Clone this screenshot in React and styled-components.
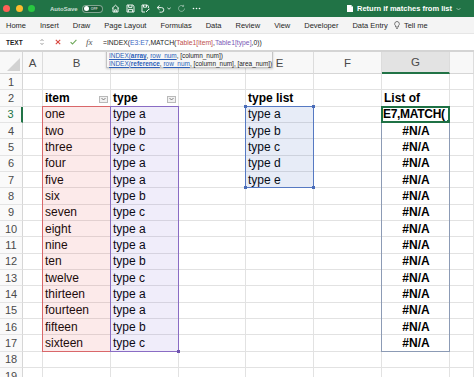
import React from "react";
import styled, { createGlobalStyle } from "styled-components";

const GlobalStyle = createGlobalStyle`
  html, body {
    margin: 0;
    padding: 0;
    width: 474px;
    height: 377px;
    overflow: hidden;
    background: #fff;
  }
  body {
    font-family: "Liberation Sans", Arial, sans-serif;
  }
`;

const Window = styled.div`
  width: 474px;
  height: 377px;
  display: flex;
  flex-direction: column;
  overflow: hidden;
`;

const TitleBar = styled.div`
  height: 17px;
  flex-shrink: 0;
  background: #217346;
  display: flex;
  align-items: center;
  padding: 0 13px 0 3px;
  color: #fff;
`;

const Lights = styled.div`
  display: flex;
  gap: 5.5px;
`;

const Light = styled.span`
  width: 7px;
  height: 7px;
  border-radius: 50%;
  background: ${p => p.$color};
`;

const AutoSave = styled.span`
  margin-left: 15px;
  font-size: 6px;
  font-weight: bold;
  color: rgba(255, 255, 255, 0.78);
`;

const Toggle = styled.span`
  margin-left: 4px;
  width: 21px;
  height: 8px;
  border-radius: 4px;
  background: #1a5c38;
  border: 1px solid rgba(255, 255, 255, 0.45);
  box-sizing: border-box;
  display: flex;
  align-items: center;
  padding-left: 1px;
  gap: 2px;
  font-size: 3.5px;
  font-weight: bold;
  color: rgba(255, 255, 255, 0.7);
`;

const Knob = styled.span`
  width: 5px;
  height: 5px;
  border-radius: 50%;
  background: #fff;
`;

const QuickIcons = styled.div`
  margin-left: 8px;
  display: flex;
  align-items: center;
  gap: 6px;
`;

const UndoGroup = styled.span`
  display: flex;
  align-items: center;
  gap: 2px;
`;

const Spacer = styled.div`
  flex: 1;
`;

const DocTitle = styled.div`
  display: flex;
  align-items: center;
  gap: 4px;
  font-size: 7.5px;
  font-weight: bold;
  color: #fff;
`;

const Tabs = styled.div`
  height: 16px;
  flex-shrink: 0;
  background: #f4f4f4;
  display: flex;
  align-items: center;
  gap: 14px;
  padding-left: 6px;
  font-size: 7.5px;
  color: #262626;
`;

const Tab = styled.span`
  white-space: nowrap;
`;

const TellMe = styled.span`
  display: flex;
  align-items: center;
  gap: 4px;
  margin-left: -8px;
`;

const FormulaBar = styled.div`
  height: 16px;
  flex-shrink: 0;
  background: #fff;
  border-top: 1px solid #e6e6e6;
  border-bottom: 2px solid #d4d4d4;
  box-sizing: content-box;
  display: flex;
  align-items: center;
`;

const NameBox = styled.div`
  width: 48px;
  box-sizing: border-box;
  padding: 0 4px 0 6px;
  display: flex;
  align-items: center;
  justify-content: space-between;
  font-size: 6.5px;
  font-weight: bold;
  color: #222;
`;

const BarIcons = styled.div`
  display: flex;
  align-items: center;
  gap: 9px;
  padding-left: 7px;
  width: 48px;
  box-sizing: border-box;
`;

const Fx = styled.span`
  font-family: "Liberation Serif", serif;
  font-style: italic;
  font-size: 9px;
  color: #555;
`;

const Formula = styled.div`
  margin-left: 7px;
  font-size: 6.8px;
  color: #222;
  white-space: nowrap;
`;

const Ref = styled.span`
  color: ${p => p.$color};
`;

const Sheet = styled.div`
  position: relative;
  flex: 1;
  overflow: hidden;
`;

const Grid = styled.div`
  display: grid;
  grid-template-columns: 23px 20px 68px 68px 67px 68px 68px 68px 1fr;
  grid-template-rows: 22px repeat(19, 16.33px);
`;

const Corner = styled.div`
  grid-row: 1;
  grid-column: 1;
  background: #f8f8f8;
  border-right: 1px solid #d6d6d6;
  border-bottom: 1px solid #d6d6d6;
  display: flex;
  align-items: flex-end;
  justify-content: flex-end;
  padding: 0 2px 2px 0;
`;

const ColHead = styled.div`
  grid-row: 1;
  grid-column: ${p => p.$c};
  background: ${p => (p.$active ? "#e3e3e3" : "#f8f8f8")};
  border-right: 1px solid #dcdcdc;
  border-bottom: ${p => (p.$active ? "2px solid #217346" : "1px solid #d6d6d6")};
  display: flex;
  align-items: center;
  justify-content: center;
  font-size: 11.5px;
  color: #4a4a4a;
`;

const RowHead = styled.div`
  grid-row: ${p => p.$r};
  grid-column: 1;
  background: #fafafa;
  border-right: ${p => (p.$active ? "2px solid #217346" : "1px solid #d6d6d6")};
  border-bottom: 1px solid #e4e4e4;
  display: flex;
  align-items: center;
  justify-content: center;
  font-size: 11px;
  line-height: 12px;
  overflow: hidden;
  color: ${p => (p.$active ? "#217346" : "#4a4a4a")};
`;

const Cell = styled.div`
  grid-row: ${p => p.$r};
  grid-column: ${p => p.$c};
  border-right: 1px solid #e2e2e2;
  border-bottom: 1px solid #e2e2e2;
  display: flex;
  align-items: center;
  justify-content: ${p => (p.$center ? "center" : "space-between")};
  padding: 0 1px 0 ${p => (p.$tight ? "1px" : "2px")};
  font-size: 12px;
  letter-spacing: ${p => (p.$tight ? "-0.3px" : "normal")};
  font-weight: ${p => (p.$bold ? "bold" : "normal")};
  color: #000;
  white-space: nowrap;
  overflow: hidden;
`;

const FilterButton = styled.span`
  width: 9px;
  height: 7px;
  border: 1px solid #b9b9b9;
  background: #f1f1f1;
  box-sizing: border-box;
  display: flex;
  align-items: center;
  justify-content: center;
  margin-right: 1px;
  margin-top: 3px;
`;

const RangeBox = styled.div`
  grid-row: ${p => p.$rows};
  grid-column: ${p => p.$c};
  position: relative;
  border: ${p => p.$w || 1}px solid ${p => p.$color};
  background: ${p => p.$fill || "transparent"};
  margin: -1px 0 0 -1px;
  pointer-events: none;
`;

const Handle = styled.span`
  position: absolute;
  width: 3px;
  height: 3px;
  background: ${p => p.$color};
  ${p => (p.$top ? "top: -2px;" : "bottom: -2px;")}
  ${p => (p.$left ? "left: -2px;" : "right: -2px;")}
`;

const Tooltip = styled.div`
  position: absolute;
  left: 106px;
  top: -2px;
  width: 167px;
  height: 18px;
  box-sizing: border-box;
  background: #f6f6f6;
  border: 1px solid #c4c4c4;
  box-shadow: 0 1px 2px rgba(0, 0, 0, 0.18);
  padding: 1px 0 0 2px;
  font-size: 6.45px;
  line-height: 7.8px;
  color: #222;
  white-space: nowrap;
`;

const Link = styled.span`
  color: #2b5fb8;
  text-decoration: underline;
  font-weight: ${p => (p.$bold ? "bold" : "normal")};
`;

const items = ["one", "two", "three", "four", "five", "six", "seven", "eight", "nine", "ten", "twelve", "thirteen", "fourteen", "fifteen", "sixteen"];
const types = ["type a", "type b", "type c", "type a", "type a", "type b", "type c", "type a", "type a", "type b", "type c", "type a", "type a", "type b", "type c"];
const typeList = ["type a", "type b", "type c", "type d", "type e"];
// C and D header letters sit under the function tooltip
const columns = ["A", "B", "", "", "E", "F", "G", ""];

const Caret = () => (
  <svg width="5" height="4" viewBox="0 0 5 4">
    <path d="M0.5 1 L2.5 3 L4.5 1" fill="none" stroke="#666" strokeWidth="0.8" />
  </svg>
);

const App = () => {
  const cells = [];
  for (let row = 1; row <= 19; row++) {
    const r = row + 1;
    for (let c = 2; c <= 9; c++) {
      let content = null;
      let bold = false;
      let center = false;
      let tight = false;
      if (row === 2 && c === 3) {
        bold = true;
        content = <>item<FilterButton><Caret /></FilterButton></>;
      } else if (row === 2 && c === 4) {
        bold = true;
        content = <>type<FilterButton><Caret /></FilterButton></>;
      } else if (row === 2 && c === 6) {
        bold = true;
        content = "type list";
      } else if (row === 2 && c === 8) {
        bold = true;
        content = "List of";
      } else if (row >= 3 && row <= 17 && c === 3) {
        content = items[row - 3];
      } else if (row >= 3 && row <= 17 && c === 4) {
        content = types[row - 3];
      } else if (row >= 3 && row <= 7 && c === 6) {
        content = typeList[row - 3];
      } else if (row === 3 && c === 8) {
        bold = true;
        tight = true;
        content = "E7,MATCH(";
      } else if (row >= 4 && row <= 17 && c === 8) {
        bold = true;
        center = true;
        content = "#N/A";
      }
      cells.push(
        <Cell key={`${row}-${c}`} $r={r} $c={c} $bold={bold} $center={center} $tight={tight}>
          {content}
        </Cell>
      );
    }
  }

  return (
    <Window>
      <GlobalStyle />
      <TitleBar>
        <Lights>
          <Light $color="#fe5f57" />
          <Light $color="#febc2e" />
          <Light $color="#28c840" />
        </Lights>
        <AutoSave>AutoSave</AutoSave>
        <Toggle>
          <Knob />
          OFF
        </Toggle>
        <QuickIcons>
          <svg width="9" height="9" viewBox="0 0 9 9" fill="none" stroke="#fff" strokeWidth="0.9">
            <path d="M1 4.5 L4.5 1.2 L8 4.5 M2 3.8 V8 H7 V3.8 M3.7 8 V5.8 H5.3 V8" />
          </svg>
          <svg width="9" height="9" viewBox="0 0 9 9" fill="none" stroke="#fff" strokeWidth="0.9">
            <path d="M1 1 H6.8 L8 2.2 V8 H1 Z M2.6 1 V3.4 H6 V1 M2.4 8 V5.4 H6.6 V8" />
          </svg>
          <svg width="9" height="9" viewBox="0 0 9 9" fill="none" stroke="#fff" strokeWidth="0.9">
            <path d="M1 1 H6.3 L7.4 2.1 V4 M1 1 V8 H4 M2.5 1 V3.2 H5.5 V1 M5 8 L8.2 4.8 L8.9 5.5" />
          </svg>
          <UndoGroup>
            <svg width="9" height="9" viewBox="0 0 9 9" fill="none" stroke="#fff" strokeWidth="0.9">
              <path d="M3.5 1.5 L1.2 3.6 L3.5 5.7 M1.4 3.6 H5.5 A2.3 2.3 0 0 1 5.5 8.2 H3.5" />
            </svg>
            <svg width="4" height="3" viewBox="0 0 4 3">
              <path d="M0.3 0.5 L2 2.3 L3.7 0.5" fill="none" stroke="#fff" strokeWidth="0.8" />
            </svg>
          </UndoGroup>
          <svg width="9" height="9" viewBox="0 0 9 9" fill="none" stroke="rgba(255,255,255,0.45)" strokeWidth="0.9">
            <path d="M7.5 4.5 A3 3 0 1 1 6.4 2.1 M6.6 0.8 V2.4 H5" />
          </svg>
          <svg width="9" height="3" viewBox="0 0 9 3" fill="#fff">
            <circle cx="1.5" cy="1.5" r="0.8" />
            <circle cx="4.5" cy="1.5" r="0.8" />
            <circle cx="7.5" cy="1.5" r="0.8" />
          </svg>
        </QuickIcons>
        <Spacer />
        <DocTitle>
          <svg width="6" height="7" viewBox="0 0 6 7">
            <path d="M0 0 H4 L6 2 V7 H0 Z" fill="#fff" />
            <path d="M4 0 V2 H6" fill="#cfe3d6" />
          </svg>
          Return if matches from list
          <svg width="5" height="4" viewBox="0 0 5 4">
            <path d="M0.5 1 L2.5 3 L4.5 1" fill="none" stroke="rgba(255,255,255,0.6)" strokeWidth="0.8" />
          </svg>
        </DocTitle>
      </TitleBar>

      <Tabs>
        <Tab>Home</Tab>
        <Tab>Insert</Tab>
        <Tab>Draw</Tab>
        <Tab>Page Layout</Tab>
        <Tab>Formulas</Tab>
        <Tab>Data</Tab>
        <Tab>Review</Tab>
        <Tab>View</Tab>
        <Tab>Developer</Tab>
        <Tab>Data Entry</Tab>
        <TellMe>
          <svg width="6" height="8" viewBox="0 0 6 8" fill="none" stroke="#444" strokeWidth="0.7">
            <path d="M3 0.5 A2.4 2.4 0 0 1 4.4 4.8 V6 H1.6 V4.8 A2.4 2.4 0 0 1 3 0.5 Z M2 7.3 H4" />
          </svg>
          Tell me
        </TellMe>
      </Tabs>

      <FormulaBar>
        <NameBox>
          TEXT
          <svg width="4" height="8" viewBox="0 0 4 8" fill="none" stroke="#777" strokeWidth="0.7">
            <path d="M0.5 3 L2 1.4 L3.5 3 M0.5 5 L2 6.6 L3.5 5" />
          </svg>
        </NameBox>
        <BarIcons>
          <svg width="6" height="6" viewBox="0 0 6 6" stroke="#d9473f" strokeWidth="1.1">
            <path d="M0.8 0.8 L5.2 5.2 M5.2 0.8 L0.8 5.2" />
          </svg>
          <svg width="7" height="6" viewBox="0 0 7 6" fill="none" stroke="#6aa655" strokeWidth="1.1">
            <path d="M0.6 3.2 L2.5 5 L6.4 0.8" />
          </svg>
          <Fx>fx</Fx>
        </BarIcons>
        <Formula>
          =INDEX(<Ref $color="#3a67c2">E3:E7</Ref>,MATCH(<Ref $color="#c0504d">Table1[item]</Ref>,<Ref $color="#7b59b6">Table1[type]</Ref>,0))
        </Formula>
      </FormulaBar>

      <Sheet>
        <Grid>
          <Corner>
            <svg width="13" height="13" viewBox="0 0 13 13">
              <path d="M13 0 V13 H0 Z" fill="#d2d2d2" />
            </svg>
          </Corner>
          {columns.map((letter, i) => (
            <ColHead key={i} $c={i + 2} $active={letter === "G"}>
              {letter}
            </ColHead>
          ))}
          {Array.from({ length: 19 }, (_, i) => (
            <RowHead key={i} $r={i + 2} $active={i + 1 === 3}>
              {i + 1}
            </RowHead>
          ))}
          {cells}
          <RangeBox $rows="4 / 19" $c={3} $color="#d9676a" $fill="rgba(232, 90, 90, 0.13)" />
          <RangeBox $rows="4 / 19" $c={4} $color="#8a6cc4" $fill="rgba(120, 90, 210, 0.11)">
            <Handle $color="#6f54b0" />
          </RangeBox>
          <RangeBox $rows="4 / 9" $c={6} $color="#5679c2" $fill="rgba(70, 110, 190, 0.13)">
            <Handle $color="#4a6cb8" $top $left />
            <Handle $color="#4a6cb8" $top />
            <Handle $color="#4a6cb8" $left />
            <Handle $color="#4a6cb8" />
          </RangeBox>
          <RangeBox $rows="4 / 19" $c={8} $color="#8c9bb5" />
          <RangeBox $rows="4 / 5" $c={8} $color="#1f7145" $w={2}>
            <Handle $color="#1f7145" />
          </RangeBox>
        </Grid>
        <Tooltip>
          <div>
            <Link>INDEX(</Link><Link $bold>array</Link>, <Link>row_num</Link>, [column_num])
          </div>
          <div>
            <Link>INDEX(</Link><Link $bold>reference</Link>, <Link>row_num</Link>, [column_num], [area_num])
          </div>
        </Tooltip>
      </Sheet>
    </Window>
  );
};

export default App;
